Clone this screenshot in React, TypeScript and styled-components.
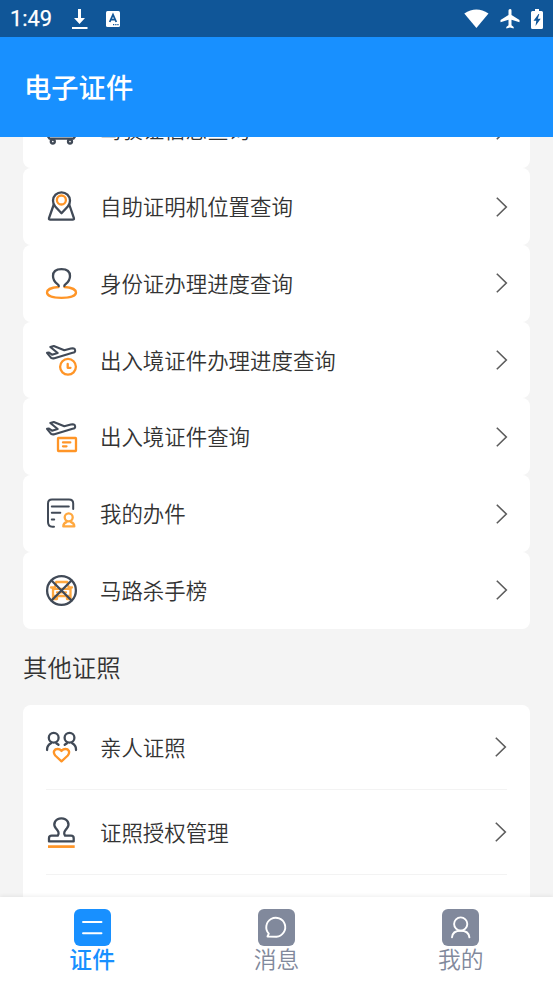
import React from 'react';
import styled, { createGlobalStyle } from 'styled-components';

const INK = '#414a57';
const ORANGE = '#ff9527';
const BLUE = '#1890ff';

const GlobalStyle = createGlobalStyle`
  * { box-sizing: border-box; }
  body {
    margin: 0;
    font-family: Roboto, "Noto Sans CJK SC", sans-serif;
    color: #333;
    background: #f4f4f4;
  }
`;

const Screen = styled.div`
  display: flex;
  flex-direction: column;
  width: 100%;
  height: 983px;
  overflow: hidden;
  background: #f4f4f4;
`;

const StatusBar = styled.div`
  display: flex;
  align-items: center;
  flex: none;
  height: 37px;
  padding: 0 9px 0 10px;
  background: #105698;
  color: #fff;
`;

const Clock = styled.span`
  width: 61px;
  font-size: 21.8px;
  font-weight: 400;
  -webkit-text-stroke: 0.25px #fff;
  line-height: 37px;
`;

const StatusIcons = styled.div<{ $end?: boolean }>`
  display: flex;
  align-items: center;
  gap: ${(p) => (p.$end ? 9.5 : 17)}px;
  margin-left: ${(p) => (p.$end ? 'auto' : '0')};
  svg { display: block; }
`;

const Header = styled.header`
  display: flex;
  align-items: center;
  flex: none;
  height: 100px;
  padding: 3px 24px 0;
  background: ${BLUE};
`;

const Title = styled.h1`
  margin: 0;
  color: #fff;
  font-size: 27.3px;
  font-weight: 500;
  line-height: 40px;
`;

const Content = styled.main`
  flex: 1;
  min-height: 0;
  overflow: hidden;
  padding: 0 23px;
`;

const ServiceList = styled.div`
  margin-top: -45.6px;
`;

const ServiceRow = styled.div`
  display: flex;
  align-items: center;
  height: 76.75px;
  padding: 0 22px 0 23px;
  border-radius: 8px;
  background: #fff;
`;

const Label = styled.span`
  flex: 1;
  margin-left: 23px;
  padding-top: 3px;
  font-size: 21.45px;
  font-weight: 350;
  line-height: 32px;
`;

const SectionTitle = styled.h2`
  margin: 0;
  height: 76.8px;
  padding-top: 1px;
  font-size: 24.4px;
  font-weight: 350;
  line-height: 78px;
`;

const Card = styled.div`
  padding: 0 23px;
  border-radius: 8px;
  background: #fff;
`;

const CardRow = styled.div`
  display: flex;
  align-items: center;
  height: 85px;
  border-bottom: 1px solid #f3f3f3;
`;

const IconSvg = styled.svg`
  display: block;
  flex: none;
  width: 31px;
  height: 31px;
  overflow: visible;
  fill: none;
  stroke: ${INK};
  stroke-width: 2.3;
  stroke-linecap: round;
  stroke-linejoin: round;
`;

const ArrowSvg = styled.svg`
  display: block;
  flex: none;
  width: 12px;
  height: 20px;
  fill: none;
  stroke: #5c5c5c;
  stroke-width: 1.6;
`;

const TabBar = styled.nav`
  display: grid;
  grid-template-columns: repeat(3, 1fr);
  flex: none;
  height: 86px;
  background: #fff;
  box-shadow: 0 -1px 4px rgba(0, 0, 0, 0.07);
  z-index: 1;
`;

const Tab = styled.div<{ $active?: boolean }>`
  display: flex;
  flex-direction: column;
  align-items: center;
  padding-top: 12px;
  color: ${(p) => (p.$active ? BLUE : '#81899c')};
  font-size: 22.8px;
  font-weight: ${(p) => (p.$active ? 500 : 350)};
  line-height: 29px;
`;

const TabIcon = styled.svg`
  display: block;
  width: 37px;
  height: 37px;
  border-radius: 6px;
  background: currentColor;
  fill: none;
  stroke: #fff;
  stroke-width: 1.9;
  stroke-linecap: round;
  stroke-linejoin: round;
`;

const Arrow = () => (
  <ArrowSvg viewBox="0 0 12 20">
    <path d="M.8 .8 10.3 10 .8 19.2" />
  </ArrowSvg>
);

const Plane = () => (
  <path
    strokeWidth="2.1"
    d="M1 7.8 3 7.5 6 9.7 11.7 8 4.3 2 7.8 1 18.3 5.2 24.8 3.6Q28.6 2.7 29.1 5.1T26.6 7.7L8.4 13.2Q6.5 13.7 5.1 12.8Z"
  />
);

const icons = {
  car: (
    <>
      <path d="M3 4H28L30 14V21L27.5 24.7H3.5L1 21V14Z" />
      <circle cx="6.8" cy="27.5" r="2" />
      <circle cx="24" cy="27.5" r="2" />
    </>
  ),
  place: (
    <>
      <path d="M15.5 22.2 9.2 15.5A8.5 8.5 0 1 1 21.8 15.5Z" />
      <path d="M7.6 14 3 27.2Q2.7 28.6 4.2 28.6H26.7Q28.3 28.6 27.9 27.2L23.4 14" />
      <circle cx="15.4" cy="9" r="4.5" stroke={ORANGE} />
    </>
  ),
  person: (
    <>
      <path stroke={ORANGE} d="M12.5 19C5.5 19.4 1 21.7 1 24.6C1 28 7.5 29.9 15.5 29.9S30 28 30 24.6C30 21.7 25.5 19.4 18.5 19" />
      <path d="M12.8 18C12.8 16 7 15 7 8C7 3 10 1.1 15.5 1.1S24 3 24 8C24 15 18.3 16 18.3 18" />
    </>
  ),
  flightClock: (
    <>
      <Plane />
      <circle cx="22" cy="21.8" r="7.9" stroke={ORANGE} />
      <path stroke={ORANGE} d="M21.7 19V22.8H24.5" />
    </>
  ),
  flightCard: (
    <>
      <Plane />
      <rect x="12" y="17" width="18" height="13" rx=".5" stroke={ORANGE} />
      <path stroke={ORANGE} d="M17 21.4H24.3M17 25.3H20.5" />
    </>
  ),
  tasks: (
    <>
      <path strokeWidth="2" d="M27.2 11V5.5Q27.2 1.5 23 1.5H6Q2 1.5 2 5.5V24Q2 28.7 6.3 28.7H8M5.8 8.5H22.8M5.8 14.8H14.3M5.8 21.4H8.2" />
      <g stroke="#ffa83f">
        <circle cx="22.7" cy="19.3" r="4" />
        <path d="M20.5 24.2Q17.3 25.3 17.3 28.4H28.3Q28.3 25.3 25 24.2" />
      </g>
    </>
  ),
  banned: (
    <>
      <path stroke="#ffa83f" d="M8.5 14 10.2 7H21.3L23 14M7 13.8H24.5V21H7ZM7 21V24H11V21M21 21V24H24.5V21M5 12.5H8M23.5 12.5H26M11 17.4H20" />
      <circle cx="15.5" cy="15.5" r="14.4" />
      <path d="M5.5 5.5 25.5 25.5M25.5 5.5 5.5 25.5" />
    </>
  ),
  family: (
    <>
      <circle cx="7.7" cy="5.8" r="4.9" />
      <circle cx="23.5" cy="5.8" r="4.9" />
      <path d="M1.1 18V17.2Q1.1 13.3 5 11.2M10.3 11.2 12.5 12.8M30 18V17.2Q30 13.3 26.2 11.2M21 11.2 18.7 12.8" />
      <path stroke={ORANGE} d="M15.5 29.4 9.2 23.5C6.3 19.8 8.6 17 11.6 17C14 17 14.9 18.3 15.5 19C16.1 18.3 17 17 19.4 17C22.4 17 24.7 19.8 21.8 23.5Z" />
    </>
  ),
  stamp: (
    <>
      <path d="M11.8 18.7C13.7 15.7 12 14 9.8 11.2C6.3 6.8 9.5 1.3 15.4 1.3S24.5 6.8 21 11.2C18.8 14 17.1 15.7 19 18.7H25Q27.7 18.7 27.7 21.3V24.4H3V21.3Q3 18.7 5.7 18.7Z" />
      <path stroke={ORANGE} strokeWidth="2.7" strokeLinecap="butt" d="M2 29.6H28.7" />
    </>
  ),
};

type IconName = keyof typeof icons;

const Icon = ({ name }: { name: IconName }) => <IconSvg viewBox="0 0 31 31">{icons[name]}</IconSvg>;

const services: { icon: IconName; label: string }[] = [
  { icon: 'car', label: '驾驶证信息查询' },
  { icon: 'place', label: '自助证明机位置查询' },
  { icon: 'person', label: '身份证办理进度查询' },
  { icon: 'flightClock', label: '出入境证件办理进度查询' },
  { icon: 'flightCard', label: '出入境证件查询' },
  { icon: 'tasks', label: '我的办件' },
  { icon: 'banned', label: '马路杀手榜' },
];

const others: { icon: IconName; label: string }[] = [
  { icon: 'family', label: '亲人证照' },
  { icon: 'stamp', label: '证照授权管理' },
];

export default function App() {
  return (
    <Screen lang="zh-CN">
      <GlobalStyle />
      <StatusBar>
        <Clock>1:49</Clock>
        <StatusIcons>
          <svg width="17" height="22" viewBox="0 0 17 22" fill="#fff">
            <path d="M7 1H10V10H14L8.5 16 3 10H7ZM1 19H16.5V21H1Z" />
          </svg>
          <svg width="16" height="18" viewBox="0 0 16 18">
            <rect x="1" y="1" width="14" height="16" rx="1.5" fill="#fff" />
            <path d="M4.7 12 8 4.6 11.3 12M5.8 9.7H10.2" fill="none" stroke="#105698" strokeWidth="1.8" />
            <path d="M8 14H9.3V15.3H8ZM10.2 14H11.5V15.3H10.2ZM12.3 14H13.6V15.3H12.3Z" fill="#105698" />
          </svg>
        </StatusIcons>
        <StatusIcons $end>
          <svg width="25" height="20" viewBox="0 0 25 20" fill="#fff">
            <path d="M.3 4.4Q12.4-3.6 24.5 4.4L12.4 19Z" />
          </svg>
          <svg width="22" height="22" viewBox="0 0 22 22" fill="#fff">
            <path d="M20.5 14.3V12.1L12.5 7.1V2.5A1.5 1.5 0 0 0 9.5 2.5V7.1L1.5 12.1V14.3L9.5 11.8V17.3L7.3 18.9V20.5L11 19.5 14.7 20.5V18.9L12.5 17.3V11.8Z" />
          </svg>
          <svg width="14" height="22" viewBox="0 0 14 22">
            <path d="M5 1H9V3H11.5Q13 3 13 4.5V19.5Q13 21 11.5 21H2.5Q1 21 1 19.5V4.5Q1 3 2.5 3H5Z" fill="#fff" />
            <path d="M8.5 6 3.5 12.7H6.3L5.5 18 10.7 10.8H7.8L9.3 6Z" fill="#105698" />
          </svg>
        </StatusIcons>
      </StatusBar>
      <Header>
        <Title>电子证件</Title>
      </Header>
      <Content>
        <ServiceList>
          {services.map((item) => (
            <ServiceRow key={item.label}>
              <Icon name={item.icon} />
              <Label>{item.label}</Label>
              <Arrow />
            </ServiceRow>
          ))}
        </ServiceList>
        <SectionTitle>其他证照</SectionTitle>
        <Card>
          {others.map((item) => (
            <CardRow key={item.label}>
              <Icon name={item.icon} />
              <Label>{item.label}</Label>
              <Arrow />
            </CardRow>
          ))}
          <CardRow />
        </Card>
      </Content>
      <TabBar>
        <Tab $active>
          <TabIcon viewBox="0 0 37 37">
            <path d="M9 13H27.5M9 24.3H27.5" />
          </TabIcon>
          证件
        </Tab>
        <Tab>
          <TabIcon viewBox="0 0 37 37">
            <path d="M9.5 27.5 10.8 24.7A9.5 9.5 0 1 1 18.5 27.7Z" />
          </TabIcon>
          消息
        </Tab>
        <Tab>
          <TabIcon viewBox="0 0 37 37">
            <circle cx="18.7" cy="15" r="6.6" />
            <path d="M10 28.3C10.3 24.3 13.2 21.7 18.6 21.7S27 24.3 27.4 28.3" />
          </TabIcon>
          我的
        </Tab>
      </TabBar>
    </Screen>
  );
}
